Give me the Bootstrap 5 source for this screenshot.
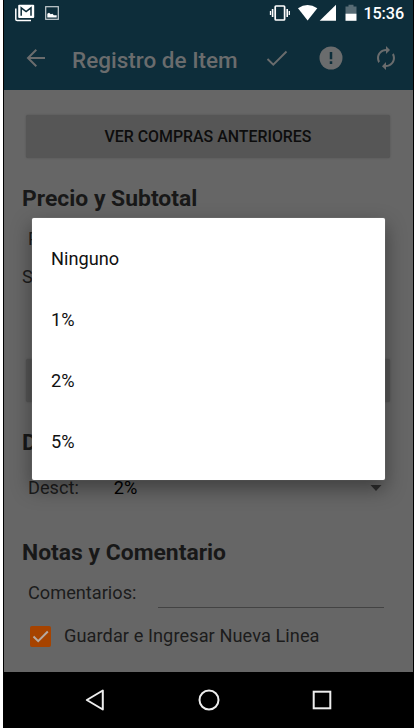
<!DOCTYPE html>
<html lang="es">
<head>
<meta charset="utf-8">
<meta name="viewport" content="width=device-width, initial-scale=1">
<title>Registro de Item</title>
<link href="https://cdn.jsdelivr.net/npm/bootstrap@5.3.0/dist/css/bootstrap.min.css" rel="stylesheet">
<style>
body{font-family:Roboto,"Noto Sans",sans-serif;background:#fff;line-height:1.2;overflow:hidden}
svg{display:block;flex:none}
.phone{width:411px;height:728px;margin-left:3px;border-left:1px solid #000;border-right:1px solid #000;background:#666}
.top{background:#0d2d3a}
.status{height:26px;padding:0 9px 0 11px}
.clock{font-size:16.2px;font-weight:500;letter-spacing:-.1px;margin-left:6px;padding-top:2px}
.wifi{margin-left:6px}
.battery{margin-left:8px}
.appbar{height:64px;color:#6a6c6d;padding:0 14px 0 20px}
.apptitle{font-size:22.5px;font-weight:500;margin:3px 0 0 24px;letter-spacing:0;line-height:40px}
.actions{gap:30px}
.screen{height:582px;padding:25px 23px 0 18px;color:#1c1c1c}
.flatbtn{height:43px;margin-left:4px;border:0;border-radius:2px;background:#565656;color:#0d0d0d;font-size:15.9px;font-weight:500;padding:1px 0 0;box-shadow:0 0 2px #505050}
.sect{height:40px;margin:20px 0 0;padding-top:1px;font-size:22.9px;font-weight:700;line-height:40px;color:#181818}
.line-row{height:38px;font-size:18.2px;padding-left:6px}
.row-price{margin-top:2px}
.gap-big{margin-top:63px}
.row-discount{margin-top:7px}
.discount-value{margin-left:35px}
.sect-notes{margin-top:25px}
.row-comment{margin-top:2px}
.row-check{margin-top:5px;letter-spacing:.07px}
.field{height:16px;border-bottom:1.5px solid #434343;margin:14px 6px 0 22px}
.tick{width:21px;height:21px;border-radius:2px;background:#a64300;margin:0 13px 0 2px}
.navkeys{height:56px;background:#000;padding:0 81px 0 80px}
.dialog{left:32px;top:218px;width:353px;height:262px;border-radius:2px;background:#fff;box-shadow:0 8px 20px 1px rgba(0,0,0,.38),0 0 1px rgba(255,255,255,.6);padding:10px 0}
.option{height:61px;padding-left:19px;font-size:18.2px;color:#111}
</style>
</head>
<body>
<div class="phone d-flex flex-column">
  <header class="top">
    <div class="status d-flex align-items-center">
      <svg width="20" height="18" viewBox="0 0 20 18"><path d="M.8 4.500V15.200a1.400 1.400 0 0 0 1.400 1.400H16" fill="none" stroke="#fff" stroke-width="1.500"/><rect x="3.200" y=".8" width="16" height="13.200" rx="1" fill="#fff"/><path d="M6.200 11.800V3.800l4.900 3.800L16 3.800v8" fill="none" stroke="#0d2d3a" stroke-width="1.500"/></svg>
      <svg class="ms-2" width="18" height="16" viewBox="0 0 18 16"><rect x="2.700" y="1.700" width="12.600" height="12.600" fill="none" stroke="#c6ced1" stroke-width="1.200"/><path d="M4.300 12.500V8.700L6 7.800l1.800 1.500L9.500 8.700l1.300 1.500h2.900v2.300z" fill="#fff"/></svg>
      <div class="d-flex align-items-center ms-auto">
        <svg width="22" height="18" viewBox="0 0 22 18"><rect x="6.200" y="2" width="9.400" height="14" rx=".8" fill="none" stroke="#fff" stroke-width="1.700"/><path d="M3.600 5v8M18.200 5v8" stroke="#fff" stroke-width="1.600"/><path d="M1.500 7v4M20.300 7v4" stroke="#fff" stroke-width="1.300"/></svg>
        <svg class="wifi" width="22" height="18" viewBox="0 0 22 18"><path d="M1 4.200Q10.500-2.200 20.300 4.200L10.600 16.500z" fill="#fff"/></svg>
        <svg width="18" height="18" viewBox="0 0 18 18"><path d="M17 .8V16.800H.7z" fill="#fff"/></svg>
        <svg class="battery" width="12" height="18" viewBox="0 0 12 18"><path d="M.5 2.500h3V.8h5v1.700h3V9H.5z" fill="#576b74"/><path d="M.5 9.500h11v7.300H.5z" fill="#fff"/></svg>
        <span class="clock text-white">15:36</span>
      </div>
    </div>
    <div class="appbar d-flex align-items-center">
      <svg width="24" height="24" viewBox="0 0 24 24"><path d="M21 12H4M12.300 3.800L4 12l8.300 8.200" fill="none" stroke="currentColor" stroke-width="2"/></svg>
      <h1 class="apptitle">Registro de Item</h1>
      <div class="actions d-flex align-items-center ms-auto">
        <svg width="24" height="24" viewBox="0 0 24 24"><path d="M2.500 13l5.800 5.700L21.500 5.500" fill="none" stroke="currentColor" stroke-width="1.900"/></svg>
        <svg width="24" height="24" viewBox="0 0 24 24"><circle cx="12" cy="12" r="11.500" fill="currentColor"/><path d="M12 6v7.300M12 15.300v2.700" stroke="#0d2d3a" stroke-width="2.500"/></svg>
        <svg width="26" height="26" viewBox="0 0 24 24"><path fill="currentColor" d="M12 5.500v2.800l3.700-3.800L12 1v2.700c-4.500 0-8.300 3.700-8.300 8.300 0 1.700.5 3.200 1.300 4.500l1.400-1.400c-.5-.9-.8-2-.8-3.100 0-3.600 2.900-6.500 6.400-6.500zm7 2L17.600 8.900c.5.900.8 2 .8 3.100 0 3.600-2.900 6.500-6.400 6.500v-2.800l-3.700 3.800L12 23v-2.700c4.500 0 8.300-3.700 8.300-8.300 0-1.700-.5-3.200-1.300-4.500z"/></svg>
      </div>
    </div>
  </header>
  <main class="screen d-flex flex-column">
    <button class="flatbtn" type="button">VER COMPRAS ANTERIORES</button>
    <h2 class="sect">Precio y Subtotal</h2>
    <div class="line-row row-price d-flex align-items-center">Precio:</div>
    <div class="line-row d-flex align-items-center ps-0">Subtotal:</div>
    <button class="flatbtn gap-big" type="button" aria-label="Precios"></button>
    <h2 class="sect">Descuento</h2>
    <div class="line-row row-discount d-flex align-items-center"><span>Desct:</span><span class="discount-value text-black">2%</span>
      <svg class="ms-auto me-2" width="12" height="8" viewBox="0 0 12 8"><path d="M.5 1h11L6 7z" fill="#2c2c2c"/></svg></div>
    <h2 class="sect sect-notes">Notas y Comentario</h2>
    <div class="line-row row-comment d-flex align-items-center">Comentarios:<div class="field flex-grow-1"></div></div>
    <div class="line-row row-check d-flex align-items-center"><span class="tick"><svg width="21" height="21" viewBox="0 0 21 21"><path d="M3.500 10.500l4.700 4.700L17.800 5.500" fill="none" stroke="#b5aaa2" stroke-width="2"/></svg></span>Guardar e Ingresar Nueva Linea</div>
  </main>
  <nav class="navkeys d-flex justify-content-between align-items-center">
    <svg width="22" height="24" viewBox="0 0 22 24"><path d="M2.800 12L18.800 2.500v19z" fill="none" stroke="#eee" stroke-width="2" stroke-linejoin="round"/></svg>
    <svg width="22" height="22" viewBox="0 0 22 22"><circle cx="11" cy="11" r="9.500" fill="none" stroke="#eee" stroke-width="2"/></svg>
    <svg width="20" height="20" viewBox="0 0 20 20"><rect x="1.700" y="1.700" width="16.600" height="16.600" fill="none" stroke="#eee" stroke-width="2"/></svg>
  </nav>
</div>
<div class="dialog position-absolute">
  <div class="option d-flex align-items-center">Ninguno</div>
  <div class="option d-flex align-items-center">1%</div>
  <div class="option d-flex align-items-center">2%</div>
  <div class="option d-flex align-items-center">5%</div>
</div>
<script src="https://cdn.jsdelivr.net/npm/bootstrap@5.3.0/dist/js/bootstrap.bundle.min.js"></script>
</body>
</html>
